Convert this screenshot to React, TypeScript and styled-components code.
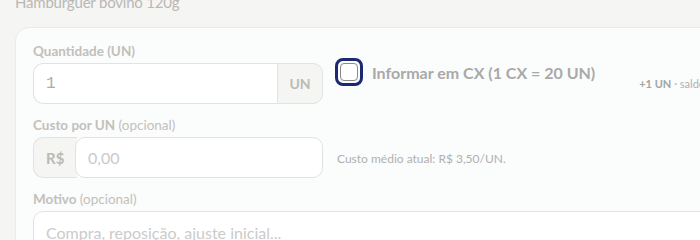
import React from "react";
import styled, { createGlobalStyle } from "styled-components";

const Global = createGlobalStyle`
  html, body { margin: 0; padding: 0; }
  body {
    background: #f5f5f4;
    font-family: "Lato", "Noto Sans", sans-serif;
    overflow: hidden;
    width: 700px;
    height: 240px;
  }
`;

const Page = styled.div`
  width: 1100px;
  padding: 0 15px;
`;

const Title = styled.div`
  margin-top: -8px;
  font-size: 15px;
  line-height: 20px;
  color: #b9b8b5;
  height: 20px;
  letter-spacing: -0.2px;
`;

const Card = styled.div`
  margin-top: 15px;
  background: #fbfcfc;
  border: 1px solid #ebebe9;
  border-radius: 14px;
  padding: 15px 17px 40px;
  display: grid;
  grid-template-columns: 290px 1fr;
  column-gap: 12px;
`;

const Field = styled.div<{ $full?: boolean; $mt?: number }>`
  display: flex;
  flex-direction: column;
  gap: 4px;
  grid-column: ${(p) => (p.$full ? "1 / -1" : "auto")};
  margin-top: ${(p) => p.$mt ?? 0}px;
`;

const Label = styled.div`
  font-size: 13.5px;
  line-height: 16px;
  font-weight: 700;
  color: #c3c0bb;
  span { font-weight: 400; }
`;

const Group = styled.div`
  display: flex;
  height: 41px;
`;

const Input = styled.div<{ $mono?: boolean; $joinRight?: boolean }>`
  flex: 1;
  box-sizing: border-box;
  background: #fff;
  border: 1px solid #e2e2e0;
  border-radius: ${(p) => (p.$joinRight ? "10px 0 0 10px" : "10px")};
  ${(p) => (p.$joinRight ? "border-right: none;" : "")}
  display: flex;
  align-items: center;
  padding-left: 12px;
  font-size: 16px;
  font-family: ${(p) => (p.$mono ? '"Liberation Mono", monospace' : "inherit")};
  color: ${(p) => (p.$mono ? "#ababab" : "#cacaca")};
`;

const Addon = styled.div<{ $side: "left" | "right" }>`
  box-sizing: border-box;
  width: ${(p) => (p.$side === "right" ? "46px" : "44px")};
  background: #f5f5f3;
  border: 1px solid #e2e2e0;
  border-radius: ${(p) => (p.$side === "right" ? "0 10px 10px 0" : "10px 0 0 10px")};
  ${(p) => (p.$side === "left" ? "border-right: none; margin-right: -2px;" : "")}
  display: flex;
  align-items: center;
  justify-content: center;
  font-weight: 700;
  font-size: ${(p) => (p.$side === "right" ? "14px" : "15px")};
  color: #b8bcb3;
  ${(p) => (p.$side === "left" ? "justify-content: flex-start; padding-left: 12px;" : "")}
`;

const Right = styled.div<{ $align: string; $pt?: number }>`
  display: flex;
  align-items: ${(p) => p.$align};
  padding-top: ${(p) => p.$pt ?? 0}px;
`;

const CheckRow = styled.div`
  display: flex;
  align-items: flex-end;
  width: 100%;
  padding-top: 15px;
  gap: 44px;
`;

const CheckLabel = styled.label`
  display: flex;
  align-items: center;
  gap: 9px;
  font-size: 16px;
  font-weight: 700;
  color: #a9a9a9;
`;

const Ring = styled.span`
  display: inline-flex;
  border: 3px solid #1d2872;
  border-radius: 8px;
  padding: 2px;
`;

const Box = styled.span`
  box-sizing: border-box;
  width: 18px;
  height: 18px;
  border: 1.5px solid #8a8a8a;
  border-radius: 4px;
  background: #fff;
`;

const Hint = styled.div`
  font-size: 11px;
  color: #b0b0b0;
  margin-bottom: -4px;
  b { color: #a4a4a4; }
`;

const Note = styled.div<{ $pb?: number }>`
  font-size: 12px;
  color: #b0b0b0;
  padding-left: 2px;
  padding-bottom: ${(p) => p.$pb ?? 0}px;
`;

const TextArea = styled.div`
  box-sizing: border-box;
  height: 70px;
  background: #fff;
  border: 1px solid #e2e2e0;
  border-radius: 10px;
  padding: 11px 12px;
  font-size: 16px;
  color: #cbcbcb;
`;

export default function App() {
  return (
    <>
      <Global />
      <Page>
        <Title>Hamburguer bovino 120g</Title>
        <Card>
          <Field>
            <Label>Quantidade (UN)</Label>
            <Group>
              <Input $mono $joinRight>1</Input>
              <Addon $side="right">UN</Addon>
            </Group>
          </Field>
          <Right $align="flex-start">
            <CheckRow>
              <CheckLabel>
                <Ring>
                  <Box />
                </Ring>
                Informar em CX (1 CX = 20 UN)
              </CheckLabel>
              <Hint>
                <b>+1 UN</b> · saldo: 21 UN
              </Hint>
            </CheckRow>
          </Right>
          <Field $mt={13}>
            <Label>
              Custo por UN <span>(opcional)</span>
            </Label>
            <Group>
              <Addon $side="left">R$</Addon>
              <Input>0,00</Input>
            </Group>
          </Field>
          <Right $align="flex-end" $pt={13}>
            <Note $pb={12}>Custo médio atual: R$ 3,50/UN.</Note>
          </Right>
          <Field $full $mt={13}>
            <Label>
              Motivo <span>(opcional)</span>
            </Label>
            <TextArea>Compra, reposição, ajuste inicial...</TextArea>
          </Field>
        </Card>
      </Page>
    </>
  );
}
